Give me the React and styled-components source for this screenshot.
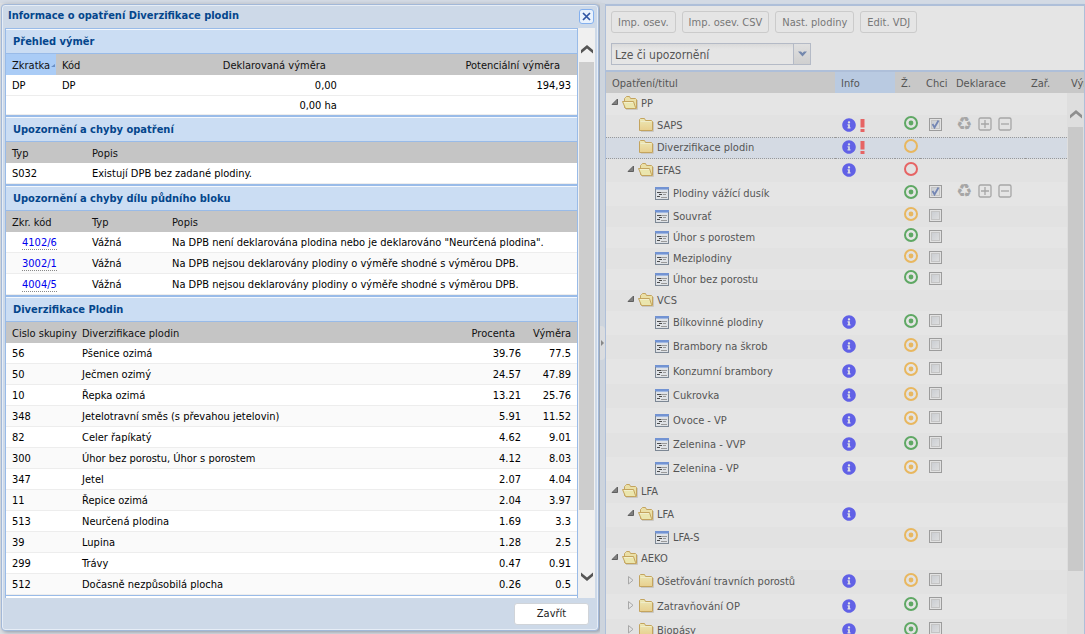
import React, { useState } from "react";
import styled, { createGlobalStyle, css } from "styled-components";
import { FaInfoCircle } from "react-icons/fa";

const GlobalStyle = createGlobalStyle`
  * {
    box-sizing: border-box;
  }
  body {
    margin: 0;
    background: #d0d8e3;
    overflow: hidden;
  }
  body, button, select, table {
    font-family: "DejaVu Sans Condensed", Tahoma, sans-serif;
    font-size: 11px;
    line-height: 14px;
  }
`;

const Page = styled.div`
  display: grid;
  grid-template-columns: 120fr 5px 96fr;
  height: 100vh;
  border-top: 3px solid #d3dae4;
`;

const DialogArea = styled.div`
  display: flex;
  min-width: 0;
  min-height: 0;
  padding: 1px 1px 3px;
  background: #dcdfe3;
`;

const Dialog = styled.section`
  display: flex;
  flex-direction: column;
  flex: 1;
  min-width: 0;
  padding: 0 3px;
  border: 1px solid #a2b8d8;
  border-radius: 4px;
  background: #cdd9e8;
  box-shadow: inset 0 0 0 1px #e6edf6, 2px 1px 4px #8a94a3;
`;

const DialogHeader = styled.header`
  display: flex;
  align-items: center;
  justify-content: space-between;
  height: 23px;
  flex: none;
  padding: 0 1px 1px 3px;
`;

const DialogTitle = styled.h1`
  margin: 0;
  font-size: 11px;
  font-weight: bold;
  color: #04468c;
`;

const CloseButton = styled.button`
  display: flex;
  align-items: center;
  justify-content: center;
  width: 15px;
  height: 15px;
  padding: 0;
  border: 1px solid #84b0ee;
  border-radius: 3px;
  background: #e9f2fd;
  cursor: pointer;
`;

const DialogBody = styled.div`
  display: flex;
  flex: 1;
  min-height: 0;
  border-left: 1px solid #99bbe8;
`;

const Sections = styled.div`
  flex: 1;
  min-width: 0;
  overflow: hidden;
  background: #fff;
  border-right: 1px solid #99bbe8;
`;

const DialogFooter = styled.footer`
  display: flex;
  align-items: center;
  justify-content: flex-end;
  flex: none;
  height: 32px;
  padding: 0 6px 1px;
`;

const FooterButton = styled.button`
  width: 75px;
  height: 22px;
  padding: 0;
  border: 1px solid #d0d4d9;
  border-radius: 3px;
  background: #fff;
  color: #222;
  cursor: pointer;
`;

const Section = styled.section`
  border-bottom: 1px solid #99bbe8;
`;

const SectionTitle = styled.h2`
  height: 26px;
  margin: 0;
  padding: 6px 7px 0;
  border-top: 1px solid #99bbe8;
  border-bottom: 1px solid #99bbe8;
  box-shadow: inset 0 1px #f4f8fd;
  background: #cbddf3;
  color: #04468c;
  font-size: 11px;
  font-weight: bold;
`;

const Table = styled.table`
  width: 100%;
  table-layout: fixed;
  border-collapse: separate;
  border-spacing: 0;
`;

const HeadCell = styled.th`
  height: 21px;
  padding: 2px ${({ $padRight = 6 }) => $padRight}px 0 6px;
  background: ${({ $sorted }) => ($sorted ? "#aaccf6" : "#c5c5c5")};
  color: #111;
  font-weight: normal;
  text-align: ${({ $align = "left" }) => $align};
  white-space: nowrap;
`;

const SortMark = styled.svg`
  float: right;
  margin: 4px -5px 0 0;
`;

const Row = styled.tr`
  height: ${({ $summary }) => ($summary ? 19 : 21)}px;
  background: ${({ $alt }) => ($alt ? "#fafafa" : "#fff")};
`;

const Cell = styled.td`
  padding: 2px 6px 0;
  border-bottom: 1px solid #ededed;
  color: #000;
  text-align: ${({ $align = "left" }) => $align};
  white-space: nowrap;
  overflow: hidden;
`;

const BlockLink = styled.a`
  margin-left: 10px;
  border-bottom: 1px dotted #888;
  color: #0000ee;
  text-decoration: none;
`;

const Scroll = styled.div`
  display: flex;
  flex-direction: column;
  flex: none;
  width: 17px;
  padding: 0 1px;
  background: ${({ $dim }) => ($dim ? "#dedede" : "#f0f0f0")};
`;

const ScrollArrow = styled.span`
  display: flex;
  justify-content: center;
  align-items: center;
  flex: none;
  height: 34px;
  padding: ${({ $down }) => ($down ? "0 0 10px" : "8px 0 0")};
  color: ${({ $dim }) => ($dim ? "#8e8e8e" : "#555")};
`;

const ScrollThumb = styled.span`
  flex: ${({ $size }) => $size};
  background: ${({ $dim }) => ($dim ? "#c9c9c9" : "#cdcdcd")};
`;

const ScrollRest = styled.span`
  flex: ${({ $size }) => $size};
`;

const Splitter = styled.div`
  display: flex;
  align-items: center;
  background: #cdd4dd;
  color: #888;
`;

const SplitterHandle = styled.span`
  display: flex;
  align-items: center;
  width: 5px;
  height: 34px;
  margin-top: 48px;
  border-radius: 0 4px 4px 0;
  background: #dadcdf;
`;

const Panel = styled.main`
  display: flex;
  flex-direction: column;
  min-width: 0;
  min-height: 0;
  margin-top: 1px;
  border: solid #aebfd9;
  border-width: 2px 1px 0;
  background: #e5e5e5;
  color: #555;
`;

const Toolbar = styled.div`
  display: flex;
  flex-direction: column;
  flex: none;
  gap: 10px;
  padding: 5px;
  height: 66px;
  border-bottom: 2px solid #aebfd9;
`;

const ButtonRow = styled.div`
  display: flex;
  gap: 6px;
`;

const ToolButton = styled.button`
  height: 22px;
  padding: 2px 6px 0;
  border: 1px solid #cbcbcb;
  border-radius: 3px;
  background: #e5e5e5;
  color: #777;
  white-space: nowrap;
  cursor: pointer;
`;

const FilterBox = styled.div`
  display: flex;
  position: relative;
  width: 200px;
  height: 22px;
  border: 1px solid #b4bac6;
  background: linear-gradient(#dadada, #e5e5e5 5px);
`;

const FilterSelect = styled.select`
  flex: 1;
  padding: 2px 3px 0;
  border: 0;
  appearance: none;
  background: none;
  color: #555;
  font-size: 12px;
`;

const FilterTrigger = styled.span`
  position: absolute;
  top: 0;
  right: 0;
  bottom: 0;
  display: flex;
  align-items: center;
  justify-content: center;
  width: 17px;
  border-left: 1px solid #b4bac6;
  background: linear-gradient(#e0e0e0, #cfcfcf);
  pointer-events: none;
`;

const TreeHeadCell = styled(HeadCell)`
  background: ${({ $sorted }) => ($sorted ? "#b9cae1" : "#c8c8c8")};
  color: #555;
  padding-right: 0;
  overflow: hidden;
`;

const TreeBody = styled.div`
  display: flex;
  flex: 1;
  min-height: 0;
`;

const TreeView = styled.div`
  flex: 1;
  min-width: 0;
  overflow: hidden;
`;

const TreeRow = styled.tr`
  height: ${({ $height }) => $height}px;
  background: ${({ $alt }) => ($alt ? "#e2e2e2" : "#e5e5e5")};
  ${({ $selected }) =>
    $selected &&
    css`
      background: #d4dae3;
      td {
        border-top: 1px dotted #999;
        border-bottom: 1px dotted #999;
      }
    `}
`;

const TreeCell = styled.td`
  padding: ${({ $pad = "0" }) => $pad};
  vertical-align: ${({ $top }) => ($top ? "top" : "middle")};
  white-space: nowrap;
  line-height: 0;
`;

const Node = styled.div`
  display: flex;
  align-items: center;
  padding-left: ${({ $level }) => $level * 16}px;
  line-height: 14px;
`;

const Expander = styled.button`
  display: flex;
  justify-content: center;
  width: 16px;
  height: 12px;
  padding: 1px 0 0 2px;
  border: 0;
  background: none;
  flex: none;
`;

const NodeText = styled.span`
  margin-left: 3px;
  padding-top: 2px;
`;

const IconRow = styled.div`
  display: flex;
  align-items: center;
  gap: ${({ $gap = 4 }) => $gap}px;
  svg {
    flex: none;
  }
`;

const RecycleSign = styled.span`
  width: 16px;
  height: 16px;
  font-family: "DejaVu Sans", sans-serif;
  font-size: 18px;
  line-height: 16px;
  color: #a6a6a6;
`;

const CheckLabel = styled.label`
  display: block;
  position: relative;
  width: 13px;
  height: 13px;
  svg {
    position: absolute;
    left: 2px;
    top: 2px;
    pointer-events: none;
  }
`;

const CheckInput = styled.input`
  appearance: none;
  display: block;
  width: 13px;
  height: 13px;
  margin: 0;
  border: 1px solid #9c9c9c;
  background: linear-gradient(135deg, #c6cad0, #e2e2e2);
  box-shadow: inset 0 0 0 1px #e2e2e2, inset 0 0 0 2px #c4c4c4;
`;

const BAD = "#e66464";
const WARN = "#e8b75f";
const OK = "#5fa864";

const Chevron = ({ down }) => (
  <svg width="12" height="9" viewBox="0 0 12 9">
    <path
      d={down ? "M0 0.5V4L6 9L12 4V0.5L6 5.5Z" : "M0 8.5V5L6 0L12 5V8.5L6 3.5Z"}
      fill="currentColor"
    />
  </svg>
);

const Scrollbar = ({ dim, thumb, rest, children }) => (
  <Scroll $dim={dim} aria-hidden="true">
    <ScrollArrow $dim={dim}>
      <Chevron />
    </ScrollArrow>
    <ScrollThumb $dim={dim} $size={thumb} />
    <ScrollRest $size={rest} />
    {children}
  </Scroll>
);

const FolderClosed = () => (
  <svg width="16" height="16" viewBox="0 0 16 16">
    <defs>
      <linearGradient id="folder" x1="0" y1="0" x2="0" y2="1">
        <stop offset="0" stopColor="#ece8b6" />
        <stop offset="1" stopColor="#e8cf8e" />
      </linearGradient>
    </defs>
    <path d="M3 14.5H15.5V5" fill="none" stroke="#c9c7c2" />
    <path
      d="M1.5 13.5V2.5L2.5 1.5H6.5L7.5 3.5H13.5L14.5 4.5V13.5Z"
      fill="url(#folder)"
      stroke="#c4a45e"
    />
    <path d="M2.5 4.5H13" stroke="#efecc9" />
  </svg>
);

const FolderOpen = () => (
  <svg width="16" height="16" viewBox="0 0 16 16">
    <path d="M4 14.5H15.5V5" fill="none" stroke="#c9c7c2" />
    <path
      d="M2.5 12.5V3.5L3.5 2.5L4.5 1.5H7.5L8.5 3.5H13.5L14.5 4.5V13.5H3.5Z"
      fill="#eadfa6"
      stroke="#c4a45e"
    />
    <path d="M0.5 6.5H11.5L13.5 12.5L12.5 13.5H3.5Z" fill="#ebe6ae" stroke="#c4a45e" />
    <path d="M2 7.5H11" stroke="#f2efcc" />
  </svg>
);

const FormIcon = () => (
  <svg width="16" height="16" viewBox="0 0 16 16">
    <rect x="1.5" y="2.5" width="13" height="12" fill="#dfe2e6" stroke="#7c8794" />
    <path d="M1 3H15" stroke="#7293d3" strokeWidth="2" />
    <path d="M2 4.5H14" stroke="#9fb7e2" />
    <path d="M3 7.5H7M5 9.5H8M3 11.5H6" stroke="#4c4c4c" />
    <path d="M7 7.5H13M9 9.5H12M7 12.5H13" stroke="#999" />
  </svg>
);

const nodeIcons = { closed: FolderClosed, open: FolderOpen, form: FormIcon };

const Arrow = ({ open }) => (
  <svg width="8" height="9" viewBox="0 0 8 9">
    {open ? (
      <path d="M6.5 1V6.5H1Z" fill="#808080" stroke="#606060" />
    ) : (
      <path d="M1.5 0.5V8L6 4.25Z" fill="none" stroke="#a8a8a8" />
    )}
  </svg>
);

const StatusRing = ({ color, dot }) => (
  <svg width="14" height="14" viewBox="0 0 14 14">
    <circle cx="7" cy="7" r="6" fill="none" stroke={color} strokeWidth="2" />
    {dot && <circle cx="7" cy="7" r="2.4" fill={color} />}
  </svg>
);

const Exclamation = () => (
  <svg width="5" height="14" viewBox="0 0 5 14">
    <path d="M0.5 1H4.5V9.5H0.5Z M0.5 11H4.5V14H0.5Z" fill={BAD} />
  </svg>
);

const SquareSign = ({ plus }) => (
  <svg width="14" height="14" viewBox="0 0 14 14">
    <rect x="1" y="1" width="12" height="12" rx="1.5" fill="none" stroke="#a6a6a6" strokeWidth="1.3" />
    <path d={plus ? "M3 7H11M7 3V11" : "M3 7H11"} stroke="#a6a6a6" strokeWidth="1.3" />
  </svg>
);

const CheckMark = () => (
  <svg width="9" height="9" viewBox="0 0 9 9">
    <path d="M1.5 4L3.5 7.5L7.5 0.5" fill="none" stroke="#7486b4" strokeWidth="1.8" />
  </svg>
);

const blockErrors = [
  ["4102/6", "Vážná", 'Na DPB není deklarována plodina nebo je deklarováno "Neurčená plodina".'],
  ["3002/1", "Vážná", "Na DPB nejsou deklarovány plodiny o výměře shodné s výměrou DPB."],
  ["4004/5", "Vážná", "Na DPB nejsou deklarovány plodiny o výměře shodné s výměrou DPB."],
];

const crops = [
  ["56", "Pšenice ozimá", "39.76", "77.5"],
  ["50", "Ječmen ozimý", "24.57", "47.89"],
  ["10", "Řepka ozimá", "13.21", "25.76"],
  ["348", "Jetelotravní směs (s převahou jetelovin)", "5.91", "11.52"],
  ["82", "Celer řapíkatý", "4.62", "9.01"],
  ["300", "Úhor bez porostu, Úhor s porostem", "4.12", "8.03"],
  ["347", "Jetel", "2.07", "4.04"],
  ["11", "Řepice ozimá", "2.04", "3.97"],
  ["513", "Neurčená plodina", "1.69", "3.3"],
  ["39", "Lupina", "1.28", "2.5"],
  ["299", "Trávy", "0.47", "0.91"],
  ["512", "Dočasně nezpůsobilá plocha", "0.26", "0.5"],
];

const tree = [
  { text: "PP", level: 0, icon: "open", height: 22 },
  { text: "SAPS", level: 1, icon: "closed", height: 22, info: true, alert: true, color: OK, dot: true, check: true, actions: true },
  { text: "Diverzifikace plodin", level: 1, icon: "closed", height: 22, info: true, alert: true, color: WARN, selected: true },
  { text: "EFAS", level: 1, icon: "open", height: 23, info: true, color: BAD },
  { text: "Plodiny vážící dusík", level: 2, icon: "form", height: 24, color: OK, dot: true, check: true, actions: true },
  { text: "Souvrať", level: 2, icon: "form", height: 21, color: WARN, dot: true, check: false },
  { text: "Úhor s porostem", level: 2, icon: "form", height: 21, color: OK, dot: true, check: false },
  { text: "Meziplodiny", level: 2, icon: "form", height: 21, color: WARN, dot: true, check: false },
  { text: "Úhor bez porostu", level: 2, icon: "form", height: 21, color: OK, dot: true, check: false },
  { text: "VCS", level: 1, icon: "open", height: 21 },
  { text: "Bílkovinné plodiny", level: 2, icon: "form", height: 24, info: true, color: OK, dot: true, check: false },
  { text: "Brambory na škrob", level: 2, icon: "form", height: 24, info: true, color: WARN, dot: true, check: false },
  { text: "Konzumní brambory", level: 2, icon: "form", height: 25, info: true, color: WARN, dot: true, check: false },
  { text: "Cukrovka", level: 2, icon: "form", height: 24, info: true, color: WARN, dot: true, check: false },
  { text: "Ovoce - VP", level: 2, icon: "form", height: 25, info: true, color: WARN, dot: true, check: false },
  { text: "Zelenina - VVP", level: 2, icon: "form", height: 24, info: true, color: OK, dot: true, check: false },
  { text: "Zelenina - VP", level: 2, icon: "form", height: 24, info: true, color: WARN, dot: true, check: false },
  { text: "LFA", level: 0, icon: "open", height: 22 },
  { text: "LFA", level: 1, icon: "open", height: 24, info: true },
  { text: "LFA-S", level: 2, icon: "form", height: 21, color: WARN, dot: true, check: false },
  { text: "AEKO", level: 0, icon: "open", height: 22 },
  { text: "Ošetřování travních porostů", level: 1, icon: "closed", height: 24, toggle: true, info: true, color: WARN, dot: true, check: false },
  { text: "Zatravňování OP", level: 1, icon: "closed", height: 25, toggle: true, info: true, color: OK, dot: true, check: false },
  { text: "Biopásy", level: 1, icon: "closed", height: 24, toggle: true, info: true, color: OK, dot: true, check: false },
];

const Cols = ({ widths }) => (
  <colgroup>
    {widths.map((w, i) => (
      <col key={i} width={w} />
    ))}
  </colgroup>
);

const TreeItem = ({ item, alt }) => {
  const [checked, setChecked] = useState(!!item.check);
  const Icon = nodeIcons[item.icon];
  const ringPad = item.height > 22 ? "3px" : "1px";

  return (
    <TreeRow $height={item.height} $alt={alt} $selected={item.selected}>
      <TreeCell $pad="0 0 2px">
        <Node $level={item.level}>
          {item.icon === "open" || item.toggle ? (
            <Expander aria-label={item.text}>
              <Arrow open={item.icon === "open"} />
            </Expander>
          ) : (
            <Expander as="span" />
          )}
          <Icon />
          <NodeText>{item.text}</NodeText>
        </Node>
      </TreeCell>
      <TreeCell $pad="0 0 2px 7px">
        <IconRow>
          {item.info && <FaInfoCircle size={14} color="#6161e6" />}
          {item.alert && <Exclamation />}
        </IconRow>
      </TreeCell>
      <TreeCell $top $pad={`${ringPad} 0 0 9px`}>
        {item.color && <StatusRing color={item.color} dot={item.dot} />}
      </TreeCell>
      <TreeCell $top $pad="3px 0 0 9px">
        {item.check !== undefined && (
          <CheckLabel>
            <CheckInput
              type="checkbox"
              aria-label={item.text}
              checked={checked}
              onChange={() => setChecked(!checked)}
            />
            {checked && <CheckMark />}
          </CheckLabel>
        )}
      </TreeCell>
      <TreeCell $top $pad="1px 0 0 6px">
        {item.actions && (
          <IconRow $gap={6}>
            <RecycleSign>♻</RecycleSign>
            <SquareSign plus />
            <SquareSign />
          </IconRow>
        )}
      </TreeCell>
      <TreeCell />
    </TreeRow>
  );
};

const MeasureDialog = () => (
  <Dialog role="dialog" aria-labelledby="dialog-title">
    <DialogHeader>
      <DialogTitle id="dialog-title">Informace o opatření Diverzifikace plodin</DialogTitle>
      <CloseButton aria-label="Zavřít okno">
        <svg width="9" height="9" viewBox="0 0 9 9">
          <path d="M1 1L8 8M8 1L1 8" stroke="#2f55a4" strokeWidth="1.7" />
        </svg>
      </CloseButton>
    </DialogHeader>
    <DialogBody>
      <Sections>
        <Section>
          <SectionTitle>Přehled výměr</SectionTitle>
          <Table>
            <Cols widths={["50", "50", undefined, "41%"]} />
            <thead>
              <tr>
                <HeadCell $sorted $padRight={5}>
                  <SortMark width="5" height="5" viewBox="0 0 5 5">
                    <path d="M0 4L4 1V4Z" fill="#6a8fc4" />
                  </SortMark>
                  Zkratka
                </HeadCell>
                <HeadCell>Kód</HeadCell>
                <HeadCell $align="right" $padRight={17}>Deklarovaná výměra</HeadCell>
                <HeadCell $align="right" $padRight={17}>Potenciální výměra</HeadCell>
              </tr>
            </thead>
            <tbody>
              <Row>
                <Cell>DP</Cell>
                <Cell>DP</Cell>
                <Cell $align="right">0,00</Cell>
                <Cell $align="right">194,93</Cell>
              </Row>
              <Row $summary>
                <Cell />
                <Cell />
                <Cell $align="right">0,00 ha</Cell>
                <Cell />
              </Row>
            </tbody>
          </Table>
        </Section>

        <Section>
          <SectionTitle>Upozornění a chyby opatření</SectionTitle>
          <Table>
            <Cols widths={["80", undefined]} />
            <thead>
              <tr>
                <HeadCell>Typ</HeadCell>
                <HeadCell>Popis</HeadCell>
              </tr>
            </thead>
            <tbody>
              <Row>
                <Cell>S032</Cell>
                <Cell>Existují DPB bez zadané plodiny.</Cell>
              </Row>
            </tbody>
          </Table>
        </Section>

        <Section>
          <SectionTitle>Upozornění a chyby dílu půdního bloku</SectionTitle>
          <Table>
            <Cols widths={["80", "80", undefined]} />
            <thead>
              <tr>
                <HeadCell>Zkr. kód</HeadCell>
                <HeadCell>Typ</HeadCell>
                <HeadCell>Popis</HeadCell>
              </tr>
            </thead>
            <tbody>
              {blockErrors.map(([code, type, text], index) => (
                <Row key={code} $alt={index % 2 === 1}>
                  <Cell>
                    <BlockLink href="#">{code}</BlockLink>
                  </Cell>
                  <Cell>{type}</Cell>
                  <Cell>{text}</Cell>
                </Row>
              ))}
            </tbody>
          </Table>
        </Section>

        <Section>
          <SectionTitle>Diverzifikace Plodin</SectionTitle>
          <Table>
            <Cols widths={["70", undefined, "80", "50"]} />
            <thead>
              <tr>
                <HeadCell $padRight={0}>Cislo skupiny</HeadCell>
                <HeadCell>Diverzifikace plodin</HeadCell>
                <HeadCell $align="right" $padRight={12}>Procenta</HeadCell>
                <HeadCell $align="right">Výměra</HeadCell>
              </tr>
            </thead>
            <tbody>
              {crops.map(([code, name, percent, area], index) => (
                <Row key={code} $alt={index % 2 === 1}>
                  <Cell>{code}</Cell>
                  <Cell>{name}</Cell>
                  <Cell $align="right">{percent}</Cell>
                  <Cell $align="right">{area}</Cell>
                </Row>
              ))}
            </tbody>
          </Table>
        </Section>
      </Sections>
      <Scrollbar thumb={447} rest={54}>
        <ScrollArrow $down>
          <Chevron down />
        </ScrollArrow>
      </Scrollbar>
    </DialogBody>
    <DialogFooter>
      <FooterButton>Zavřít</FooterButton>
    </DialogFooter>
  </Dialog>
);

const MeasurePanel = () => (
  <Panel>
    <Toolbar>
      <ButtonRow>
        <ToolButton>Imp. osev.</ToolButton>
        <ToolButton>Imp. osev. CSV</ToolButton>
        <ToolButton>Nast. plodiny</ToolButton>
        <ToolButton>Edit. VDJ</ToolButton>
      </ButtonRow>
      <FilterBox>
        <FilterSelect aria-label="Filtr opatření">
          <option>Lze či upozornění</option>
        </FilterSelect>
        <FilterTrigger>
          <svg width="9" height="6" viewBox="0 0 9 6">
            <path d="M0 0.5H3L4.5 2L6 0.5H9L4.5 5.5Z" fill="#7488ad" />
          </svg>
        </FilterTrigger>
      </FilterBox>
    </Toolbar>
    <Table>
      <Cols widths={[undefined, "60", "25", "30", "75", "40", "19"]} />
      <thead>
        <tr>
          <TreeHeadCell>Opatření/titul</TreeHeadCell>
          <TreeHeadCell $sorted>Info</TreeHeadCell>
          <TreeHeadCell>Ž.</TreeHeadCell>
          <TreeHeadCell>Chci</TreeHeadCell>
          <TreeHeadCell>Deklarace</TreeHeadCell>
          <TreeHeadCell>Zař.</TreeHeadCell>
          <TreeHeadCell>Výměra</TreeHeadCell>
        </tr>
      </thead>
    </Table>
    <TreeBody>
      <TreeView>
        <Table>
          <Cols widths={[undefined, "60", "25", "30", "75", "42"]} />
          <tbody>
            {tree.map((item, index) => (
              <TreeItem key={index} item={item} alt={index % 2 === 1} />
            ))}
          </tbody>
        </Table>
      </TreeView>
      <Scrollbar dim thumb={444} rest={63} />
    </TreeBody>
  </Panel>
);

const App = () => {
  return (
    <>
      <GlobalStyle />
      <Page>
        <DialogArea>
          <MeasureDialog />
        </DialogArea>
        <Splitter>
          <SplitterHandle>
            <svg width="4" height="6" viewBox="0 0 4 6">
              <path d="M1 0L4 3L1 6Z" fill="currentColor" />
            </svg>
          </SplitterHandle>
        </Splitter>
        <MeasurePanel />
      </Page>
    </>
  );
};

export default App;
